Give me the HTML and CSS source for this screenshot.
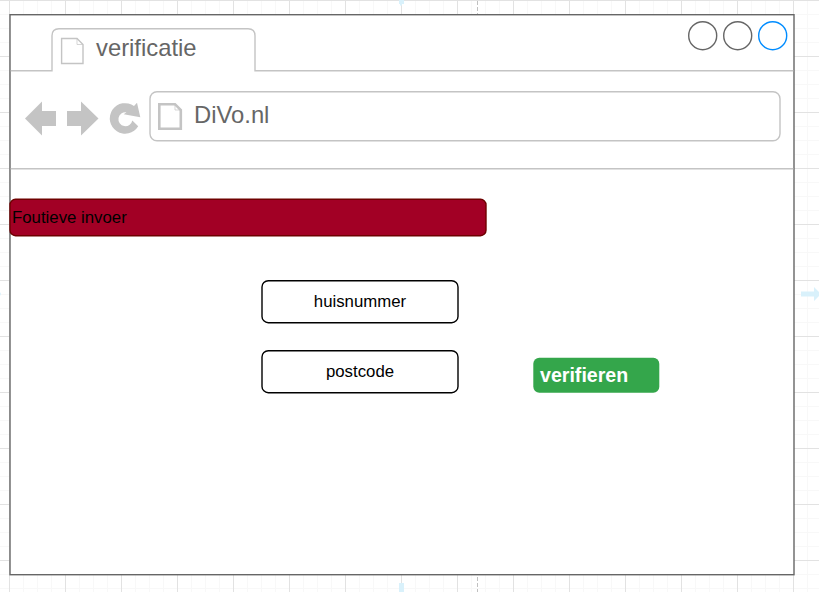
FILE: index.html
```html
<!DOCTYPE html>
<html lang="nl">
<head>
<meta charset="utf-8">
<title>verificatie</title>
<link rel="stylesheet" href="styles.css">
</head>
<body>
<svg class="canvas-marks" width="819" height="592" aria-hidden="true">
  <path class="page-break" d="M477.500 0V592"/>
  <path class="hint" d="M399 0h5v4h-2v1.500h-2v-1.500h-1zM399 583h5v9h-5zM801 291.500h13v-4.500l7 7-7 7v-4.500h-13zM0 292l1 2-1 2z"/>
</svg>
<main class="window stack">
  <svg class="outline" width="784" height="561"><rect class="frame" x="0" y=".7" width="784" height="560"/></svg>
  <div class="window-body">
    <header class="tabs stack">
      <svg class="outline" width="784" height="56"><path class="line" d="M.7 56.700H42V21.700Q42 14.700 49 14.700H238Q245 14.700 245 21.700V56.700H783.300"/></svg>
      <div class="tab-row">
        <div class="tab">
          <svg width="24" height="28"><path class="line" d="M.6 1.500H16L22 7.500V26.500H.6Z"/><path class="fold" d="M16 1.500V7.500H22"/></svg>
          <span class="label tab-label">verificatie</span>
        </div>
        <svg class="controls" width="102" height="32"><circle class="ring" cx="15.700" cy="15.700" r="14"/><circle class="ring" cx="50.700" cy="15.700" r="14"/><circle class="ring active" cx="85.700" cy="15.700" r="14"/></svg>
      </div>
    </header>
    <nav class="toolbar stack">
      <svg class="outline" width="784" height="98"><path class="line" d="M.7 98.700H783.300"/><rect class="line" x="140" y="21.700" width="630" height="49" rx="7"/></svg>
      <div class="tool-row">
        <svg class="nav-icons" width="120" height="36">
          <path d="M0 17.500L17 .5V10H31V25H17V34.500Z"/>
          <path d="M42 10H56V.5L73.500 17.500L56 34.500V25H42Z"/>
          <path d="M109 5L112 1.700L115.300 16.300L98.700 13.300L101.500 11.300A7 7 0 1 0 107.300 19.500L113.200 25.300A15.300 15.300 0 1 1 109 5Z"/>
        </svg>
        <svg class="page-icon" width="26" height="30"><path class="line thick" d="M1.300 2.200H17L22.800 8V26.700H1.300Z"/><path class="fold" d="M17 2.200V8H22.800"/></svg>
        <span class="label">DiVo.nl</span>
      </div>
    </nav>
    <section class="content">
      <div class="error stack">
        <svg class="outline" width="477" height="38"><rect x="0" y=".3" width="476" height="36.400" rx="5.500"/></svg>
        <span>Foutieve invoer</span>
      </div>
      <form class="form">
        <div class="fields">
          <div class="field stack"><svg class="outline" width="196" height="42"><rect x="0" y=".7" width="196" height="42" rx="6.300"/></svg><span>huisnummer</span></div>
          <div class="field stack"><svg class="outline" width="196" height="42"><rect x="0" y=".7" width="196" height="42" rx="6.300"/></svg><span>postcode</span></div>
        </div>
        <div class="verify stack"><svg class="outline" width="126" height="36"><rect x=".3" y=".7" width="126" height="35" rx="6"/></svg><span>verifieren</span></div>
      </form>
    </section>
  </div>
</main>
</body>
</html>
```
FILE: styles.css
```css
* { box-sizing: border-box; }
body {
  margin: 0;
  height: 592px;
  overflow: hidden;
  font: 16.8px/20px "Liberation Sans", Arial, sans-serif;
  color: #000;
  background:
    linear-gradient(90deg, #e2e2e2 1px, transparent 1px) 9px 0 / 56px 56px,
    linear-gradient(#e2e2e2 1px, transparent 1px) 0 0 / 56px 56px,
    linear-gradient(90deg, #f8f8f8 1px, transparent 1px) 9px 0 / 14px 14px,
    linear-gradient(#f8f8f8 1px, transparent 1px) 0 0 / 14px 14px,
    #fff;
}
svg { display: block; flex: none; overflow: visible; }
.stack { display: grid; }
.stack > * { grid-area: 1 / 1; }
.outline { fill: none; stroke-width: 1.4; }
.canvas-marks { position: absolute; top: 0; left: 0; z-index: -1; overflow: hidden; }
.page-break { stroke: #c0c0c0; stroke-dasharray: 4 2; stroke-dashoffset: -1; }
.hint { fill: #d9f1fb; }
.window { width: 784px; margin: 14px 0 0 10px; }
.frame { fill: #fff; stroke: #666; }
.line { fill: none; stroke: #c4c4c4; stroke-width: 1.4; }
.thick { stroke-width: 2.6; }
.fold { fill: none; stroke: #c4c4c4; stroke-width: .7; }
.window-body { display: grid; grid-template-rows: 56px 98px 406px; }
.tab-row { display: flex; justify-content: space-between; padding: 6px 5px 0 51px; }
.tab { display: flex; padding-top: 17px; }
.label { color: #666; font-size: 23.8px; line-height: 28px; }
.tab-label { margin: -3px 0 0 11px; }
.ring { fill: none; stroke: #666; stroke-width: 1.4; }
.active { stroke: #008cff; }
.tool-row { display: flex; padding: 31px 0 0 15px; }
.nav-icons { fill: #c4c4c4; }
.page-icon { margin: 1px 0 0 13px; }
.tool-row .label { margin-left: 10px; }
.content { padding-top: 31px; }
.error { width: 477px; height: 38px; align-items: center; }
.error rect { fill: #a20025; stroke: #6f0000; }
.error span { padding-left: 2px; }
.form { display: flex; align-items: flex-start; padding: 43px 0 0 252px; gap: 75px; }
.fields { display: grid; gap: 28px; }
.field { width: 196px; height: 42px; text-align: center; align-items: center; }
.field span { padding-top: 2px; }
.field rect { stroke: #000; }
.verify { width: 126px; height: 36px; margin-top: 77px; align-items: center; color: #fff; font-size: 19.6px; font-weight: 700; }
.verify rect { fill: #34a64b; }
.verify span { padding-left: 7px; }
```
